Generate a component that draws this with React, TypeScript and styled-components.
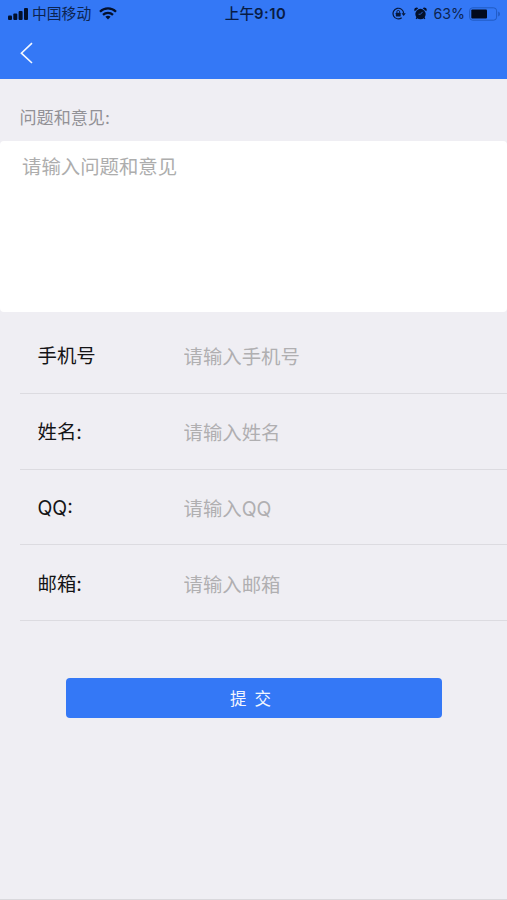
import React from "react";
import styled, { createGlobalStyle } from "styled-components";

const GlobalStyle = createGlobalStyle`
  * { box-sizing: border-box; }
  body {
    margin: 0;
    background: #efeef3;
    font-family: Inter, "Noto Sans CJK SC", sans-serif;
  }
  input, textarea, button { font-family: inherit; }
`;

const Screen = styled.div`
  display: flex;
  flex-direction: column;
  width: 507px;
  height: 900px;
  overflow: hidden;
  background: #efeef3;
  border-bottom: 1px solid #d9d8dc;
`;

const Header = styled.header`
  height: 79px;
  background: #3478f6;
  color: #0a1a3a;
`;

const StatusBar = styled.div`
  display: grid;
  grid-template-columns: 1fr auto 1fr;
  align-items: center;
  height: 27px;
  padding: 0 6px 0 8px;
`;

const StatusGroup = styled.div<{ $end?: boolean }>`
  display: flex;
  align-items: center;
  justify-content: ${(p) => (p.$end ? "flex-end" : "flex-start")};
  svg { display: block; flex: none; }
`;

const Carrier = styled.span`
  margin: 0 8px 0 4px;
  font-size: 14.8px;
  line-height: 26px;
  color: #0c2450;
`;

const Clock = styled.span`
  padding-left: 2px;
  font-size: 14.6px;
  font-weight: 500;
  line-height: 26px;
  color: #081c45;
`;

const ClockDigits = styled.span`
  font-size: 14.8px;
  font-weight: 600;
  letter-spacing: 0.5px;
`;

const Battery = styled.span`
  margin: 0 4px 0 7px;
  font-size: 14.2px;
  line-height: 26px;
  color: #0c2450;
`;

const NavBar = styled.nav`
  display: flex;
  align-items: center;
  height: 52px;
  padding-left: 19px;
`;

const BackButton = styled.button`
  display: flex;
  padding: 0;
  border: 0;
  background: none;
`;

const SectionTitle = styled.h2`
  height: 62px;
  margin: 0;
  padding: 26px 19.5px 0;
  font-size: 17.1px;
  font-weight: 400;
  line-height: 26px;
  color: #929196;
`;

const Feedback = styled.textarea`
  display: block;
  width: 100%;
  height: 171px;
  padding: 12px 22px;
  border: 0;
  border-radius: 4px;
  outline: 0;
  resize: none;
  background: #fff;
  font-size: 19.4px;
  line-height: 29px;
  &::placeholder { color: #adadad; opacity: 1; }
`;

const Fields = styled.div`
  display: flex;
  flex-direction: column;
  padding: 6px 0 0 20px;
`;

const Field = styled.label`
  display: flex;
  align-items: center;
  height: 75.8px;
  padding: 1.6px 0 0 17.5px;
  border-bottom: 1px solid #dcdbe0;
`;

const FieldName = styled.span`
  width: 146px;
  font-size: 19.4px;
  line-height: 30px;
  color: #141416;
`;

const FieldInput = styled.input`
  flex: 1;
  min-width: 0;
  height: 32px;
  padding: 2px 0 0;
  border: 0;
  outline: 0;
  background: none;
  font-size: 19.4px;
  line-height: 30px;
  &::placeholder { color: #b0afb1; opacity: 1; }
`;

const Submit = styled.button`
  width: 376px;
  height: 40px;
  margin: 56.8px 0 0 66px;
  padding: 2px 7px 0 0;
  border: 0;
  border-radius: 4px;
  background: #3478f6;
  color: #f1f6ff;
  font-size: 16.5px;
  line-height: 38px;
  word-spacing: 3.5px;
`;

const SignalIcon = () => (
  <svg width="20" height="12" viewBox="0 0 20 12" fill="#03102b">
    <rect x="0" y="7.5" width="4" height="4.5" rx="1" />
    <rect x="5.3" y="5.4" width="4" height="6.6" rx="1" />
    <rect x="10.6" y="3" width="4" height="9" rx="1" />
    <rect x="16" y="0" width="4" height="12" rx="1" />
  </svg>
);

const WifiIcon = () => (
  <svg width="18" height="13" viewBox="0 0 18 13" fill="none" stroke="#03102b" strokeWidth="2.2">
    <path d="M1 4.8C5.4.3 12.6.3 17 4.8" />
    <path d="M4 7.9c2.8-2.8 7.2-2.8 10 0" />
    <path d="M6.4 9.8c1.5-1.4 3.7-1.4 5.2 0L9 12.6Z" fill="#03102b" stroke="none" />
  </svg>
);

const RotationLockIcon = () => (
  <svg width="14" height="13" viewBox="0 0 15 14" fill="none" stroke="#06183c">
    <path d="M10.4 11.5A5.7 5.7 0 1 1 12.5 7" strokeWidth="1.3" />
    <path d="M10.2 6.6h4.6l-2.3 3Z" fill="#06183c" stroke="none" />
    <rect x="4.1" y="6.2" width="5.2" height="3.9" rx=".5" fill="#06183c" stroke="none" />
    <path d="M5.2 6.4V5.2a1.5 1.5 0 0 1 3 0v1.2" strokeWidth="1" />
  </svg>
);

const AlarmIcon = () => (
  <svg width="13" height="13" viewBox="0 0 14 14" fill="#03102b">
    <circle cx="7" cy="7.6" r="5.6" />
    <path d="M.8 4.5a2.5 2.5 0 0 1 3.8-3.2ZM13.2 4.5a2.5 2.5 0 0 0-3.8-3.2Z" />
    <path d="m3.6 11-1.2 1.9M10.4 11l1.2 1.9" stroke="#03102b" strokeWidth="1.5" />
    <path d="M9.3 5.2 7 7.8H4.9" fill="none" stroke="#3478f6" strokeWidth=".8" />
  </svg>
);

const BatteryIcon = () => (
  <svg width="32" height="14" viewBox="0 0 32 14">
    <rect x=".6" y=".8" width="27" height="12.4" rx="3" fill="none" stroke="#205ac2" />
    <rect x="2.3" y="2.5" width="15.7" height="9" rx="1" fill="#020a1d" />
    <path d="M29.2 4.6q1.8.8 1.8 2.4t-1.8 2.4Z" fill="#205ac2" />
  </svg>
);

const BackIcon = () => (
  <svg width="15" height="22" viewBox="0 0 15 22" fill="none" stroke="#f4f8ff" strokeWidth="1.6">
    <path d="M13 1.2 2.4 11.2 13 21" />
  </svg>
);

const StatusIcons = styled.span`
  display: flex;
  align-items: center;
  gap: 8px;
`;

const fields = [
  { name: "手机号", hint: "请输入手机号" },
  { name: "姓名:", hint: "请输入姓名" },
  { name: "QQ:", hint: "请输入QQ" },
  { name: "邮箱:", hint: "请输入邮箱" },
];

export default function App() {
  return (
    <>
      <GlobalStyle />
      <Screen>
        <Header>
          <StatusBar>
            <StatusGroup>
              <SignalIcon />
              <Carrier>中国移动</Carrier>
              <WifiIcon />
            </StatusGroup>
            <Clock>
              上午<ClockDigits>9:10</ClockDigits>
            </Clock>
            <StatusGroup $end>
              <StatusIcons>
                <RotationLockIcon />
                <AlarmIcon />
              </StatusIcons>
              <Battery>63%</Battery>
              <BatteryIcon />
            </StatusGroup>
          </StatusBar>
          <NavBar>
            <BackButton aria-label="返回">
              <BackIcon />
            </BackButton>
          </NavBar>
        </Header>
        <SectionTitle>问题和意见:</SectionTitle>
        <Feedback placeholder="请输入问题和意见" />
        <Fields>
          {fields.map((f) => (
            <Field key={f.name}>
              <FieldName>{f.name}</FieldName>
              <FieldInput placeholder={f.hint} />
            </Field>
          ))}
        </Fields>
        <Submit>提 交</Submit>
      </Screen>
    </>
  );
}
